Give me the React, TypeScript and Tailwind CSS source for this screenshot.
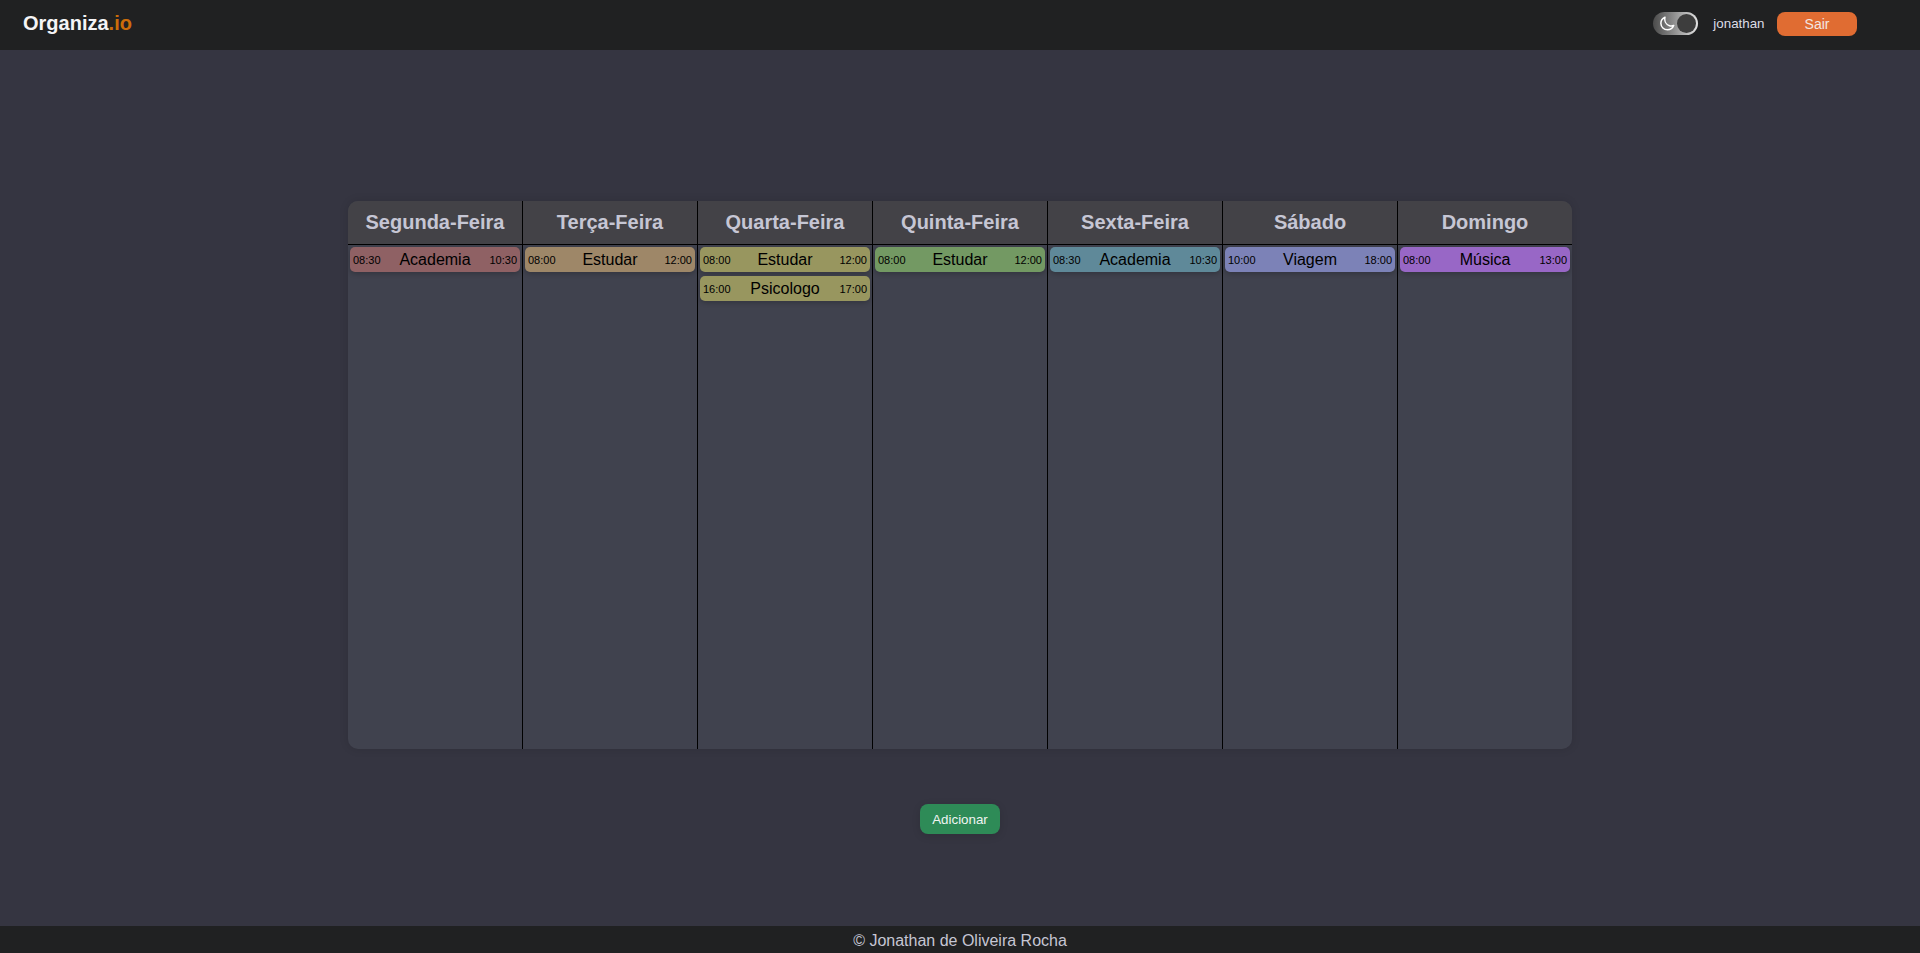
type Task = { name: string; start: string; end: string };
type Day = { label: string; color: string; tasks: Task[] };

const days: Day[] = [
  { label: "Segunda-Feira", color: "bg-[#8f6164]", tasks: [{ name: "Academia", start: "08:30", end: "10:30" }] },
  { label: "Terça-Feira", color: "bg-[#9e8768]", tasks: [{ name: "Estudar", start: "08:00", end: "12:00" }] },
  {
    label: "Quarta-Feira",
    color: "bg-[#98965f]",
    tasks: [
      { name: "Estudar", start: "08:00", end: "12:00" },
      { name: "Psicologo", start: "16:00", end: "17:00" },
    ],
  },
  { label: "Quinta-Feira", color: "bg-[#739963]", tasks: [{ name: "Estudar", start: "08:00", end: "12:00" }] },
  { label: "Sexta-Feira", color: "bg-[#5f8999]", tasks: [{ name: "Academia", start: "08:30", end: "10:30" }] },
  { label: "Sábado", color: "bg-[#7c82b7]", tasks: [{ name: "Viagem", start: "10:00", end: "18:00" }] },
  { label: "Domingo", color: "bg-[#9867c6]", tasks: [{ name: "Música", start: "08:00", end: "13:00" }] },
];

function ThemeToggle() {
  return (
    <button
      aria-label="Tema"
      className="mb-px flex h-[23px] w-[45px] items-center justify-between rounded-full bg-linear-to-r from-[#4b4b4b] to-[#e4e4e4] pr-[2px] pl-[7px]"
    >
      <svg width="15" height="15" viewBox="0 0 15 15" fill="none" stroke="#ffffff" strokeWidth="1.5" strokeLinejoin="round">
        <path d="M5 1.2C2.4 2.3.8 4.7.9 7.5c.1 3.600 3 6.300 6.500 6.300 2.800 0 5.300-1.700 6.300-4.300-1.400.6-2.800.7-4.200.2C6 8.600 4.200 5 5 1.200Z" />
      </svg>
      <span className="size-[19px] rounded-full bg-[#3d3d3d]" />
    </button>
  );
}

function TaskRow({ task, color }: { task: Task; color: string }) {
  return (
    <li className={`flex h-[25px] items-center justify-between rounded-[5px] px-[3px] text-black shadow-[0_2px_5px_rgba(0,0,0,0.2)] ${color}`}>
      <span className="pt-px text-[11px]">{task.start}</span>
      <span className="text-base leading-[25px]">{task.name}</span>
      <span className="pt-px text-[11px]">{task.end}</span>
    </li>
  );
}

export default function App() {
  return (
    <div className="flex h-screen flex-col bg-[#353541] font-['Liberation_Sans',Arial,sans-serif]">
      <header className="flex h-[50px] shrink-0 items-center justify-between bg-[#202122] pr-[63px] pb-[2px] pl-[23px]">
        <h1 className="pb-[2px] text-xl leading-6 font-bold text-[#f4f4f6]">
          Organiza<span className="text-[#cc6d0a]">.io</span>
        </h1>
        <div className="flex items-center">
          <ThemeToggle />
          <span className="ml-[15.5px] text-[13.333px] text-[#dddde6]">jonathan</span>
          <button className="ml-[12.5px] h-6 w-20 rounded-lg bg-[#e06c32] text-sm leading-6 text-[#f2e6e0]">Sair</button>
        </div>
      </header>

      <main className="flex flex-1 flex-col items-center pt-[151px]">
        <section className="flex h-[548px] w-[1224px] divide-x divide-black overflow-hidden rounded-[10px] bg-[#40424e] shadow-[0_0_10px_rgba(0,0,0,0.12)]">
          {days.map((day, index) => (
            <div key={day.label} className={index < 6 ? "w-[175px]" : "w-[174px]"}>
              <h2 className="h-11 border-b border-black bg-[#434247] text-center text-xl leading-[42px] font-bold text-[#c6c6d4]">
                {day.label}
              </h2>
              <ul className="flex flex-col gap-1 p-[2px]">
                {day.tasks.map((task) => (
                  <TaskRow key={task.start} task={task} color={day.color} />
                ))}
              </ul>
            </div>
          ))}
        </section>
        <button className="mt-[55px] h-[30px] w-20 rounded-lg bg-[#2e8b57] pt-px text-[13.333px] text-[#f0f4f2] shadow-[0_2px_8px_rgba(0,0,0,0.12)]">
          Adicionar
        </button>
      </main>

      <footer className="h-[27px] shrink-0 bg-[#202122] pt-px text-center text-base leading-[27px] text-[#c6c6d4]">
        © Jonathan de Oliveira Rocha
      </footer>
    </div>
  );
}
